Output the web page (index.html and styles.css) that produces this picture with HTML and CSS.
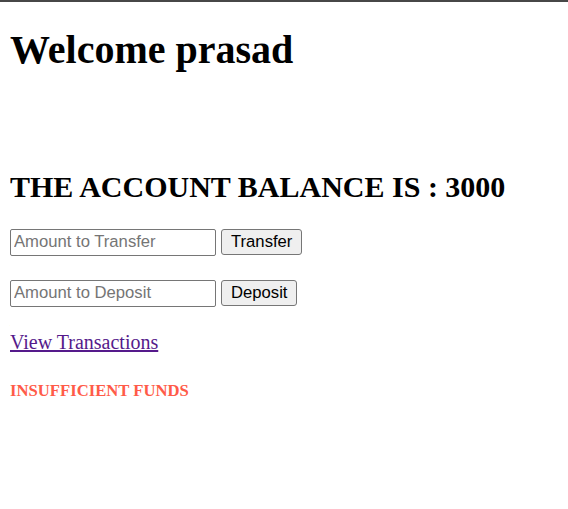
FILE: index.html
```html
<!DOCTYPE html>
<html>
<head>
<meta charset="utf-8">
<title>Account</title>
<link rel="stylesheet" href="styles.css">
</head>
<body>
<h1 class="welcome">Welcome prasad</h1>
<h2 class="balance">THE ACCOUNT BALANCE IS : 3000</h2>
<div class="actions">
  <form class="row">
    <input class="field" type="text" placeholder="Amount to Transfer">
    <button class="btn" type="button">Transfer</button>
  </form>
  <form class="row">
    <input class="field" type="text" placeholder="Amount to Deposit">
    <button class="btn" type="button">Deposit</button>
  </form>
  <a class="link" href="#">View Transactions</a>
</div>
<h5 class="error">INSUFFICIENT FUNDS</h5>
</body>
</html>
```
FILE: styles.css
```css
html {
  border-top: 2px solid #474747;
  background: #fff;
}
body {
  margin: 10px;
  font-family: "Liberation Serif", "Times New Roman", serif;
  font-size: 20px;
  color: #000;
}
.welcome {
  font-size: 40px;
  font-weight: bold;
  line-height: normal;
  margin: 14.3px 0 97px 0;
}
.balance {
  font-size: 30px;
  font-weight: bold;
  line-height: normal;
  margin: 0 0 24.5px 0;
}
.actions {
  display: flex;
  flex-direction: column;
  align-items: flex-start;
  gap: 24px;
}
.row {
  display: flex;
  align-items: center;
  gap: 5px;
  margin: 0;
}
.field {
  box-sizing: border-box;
  width: 206px;
  height: 27px;
  padding: 1px 3px;
  border: 1px solid #767676;
  border-radius: 2px;
  font-family: "Liberation Sans", Arial, sans-serif;
  font-size: 16.67px;
  color: #000;
  background: #fff;
}
.field::placeholder {
  color: #757575;
}
.btn {
  box-sizing: border-box;
  height: 26px;
  padding: 1px 9px;
  border: 1px solid #767676;
  border-radius: 3px;
  background: #efefef;
  font-family: "Liberation Sans", Arial, sans-serif;
  font-size: 16.67px;
  color: #000;
}
.link {
  font-size: 20px;
  line-height: normal;
  color: #551a8b;
  text-decoration: underline;
}
.error {
  font-size: 16.67px;
  font-weight: bold;
  line-height: normal;
  color: #ff5b48;
  margin: 27px 0 0 0;
}
```
